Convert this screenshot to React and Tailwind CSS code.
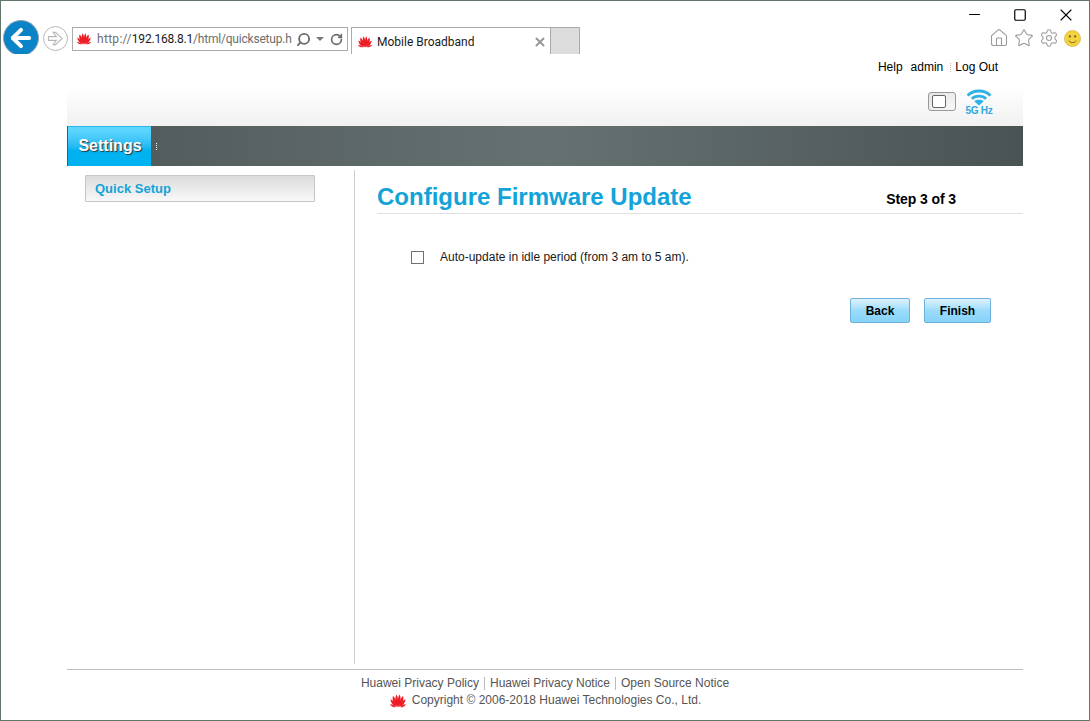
import { ArrowLeft, Home, Star, Settings, Search, RotateCw, X, Minus, Square } from 'lucide-react';

const HuaweiLogo = ({ className }) => (
  <svg viewBox="0 0 32 24" className={className}>
    <g fill="#ee1c25">
      <path d="M15.3 23.5 C11 16 10 7 13 0.5 C16.5 4 17 15 15.3 23.5 Z" />
      <path d="M16.7 23.5 C21 16 22 7 19 0.5 C15.5 4 15 15 16.7 23.5 Z" />
      <path d="M14 22.5 C9 18 5 10.5 7 3 C11.5 6.5 14.5 15 14 22.5 Z" />
      <path d="M18 22.5 C23 18 27 10.5 25 3 C20.5 6.5 17.5 15 18 22.5 Z" />
      <path d="M12.8 22.5 C8 20.5 3 15.5 2.5 9 C7 10.5 11.5 16.5 12.8 22.5 Z" />
      <path d="M19.2 22.5 C24 20.5 29 15.5 29.5 9 C25 10.5 20.5 16.5 19.2 22.5 Z" />
      <path d="M11.5 23 C8 23 4 21.5 2 18 C6 17.5 9.5 20 11.5 23 Z" />
      <path d="M20.5 23 C24 23 28 21.5 30 18 C26 17.5 22.5 20 20.5 23 Z" />
    </g>
  </svg>
);

const BlueButton = ({ label, width }) => (
  <button className={`${width} h-[25px] rounded-[2px] border border-[#6fb1de] bg-gradient-to-b from-[#e0f3fe] via-[#9bdcfb] to-[#86d3f9] text-[12px] font-bold text-black`}>
    {label}
  </button>
);

const Wifi5g = () => (
  <div className="flex flex-col items-center w-[28px]">
    <svg viewBox="0 0 28 18" className="w-[28px] h-[17px]" fill="none" stroke="#2fb0e6" strokeWidth="3">
      <path d="M2 7 C8 0.5 20 0.5 26 7" />
      <path d="M6.5 10.5 C10 6.5 18 6.5 21.5 10.5" />
      <path d="M9 13 L14 17.5 L19 13 C16 11 12 11 9 13 Z" fill="#2fb0e6" stroke="none" />
    </svg>
    <span className="text-[10px] leading-[10px] font-bold text-[#2fa8e0] whitespace-nowrap tracking-[-0.3px]">5G Hz</span>
  </div>
);

export default function App() {
  return (
    <div className="w-[1090px] h-[721px] bg-white border border-[#64766a] flex flex-col overflow-hidden font-['Liberation_Sans',Arial,sans-serif]">
      {/* Browser chrome */}
      <div className="h-[53px] flex shrink-0 overflow-hidden">
        <div className="flex items-start pl-[2px] pt-[19px]">
          <div className="w-[36px] h-[36px] rounded-full bg-[#0a84c6] border border-[#8fa3ae] flex items-center justify-center">
            <ArrowLeft className="w-[28px] h-[28px] text-white" strokeWidth={3.4} />
          </div>
          <div className="ml-[4px] mt-[6px] w-[25px] h-[25px] rounded-full border border-[#b9b9b9] flex items-center justify-center">
            <svg viewBox="0 0 18 18" className="w-[17px] h-[17px]" fill="none" stroke="#b5b5b5" strokeWidth="1.1">
              <path d="M1.5 7 H10 L6.5 2.5 H9 L16 9 L9 15.5 H6.5 L10 11 H1.5 Z" />
            </svg>
          </div>
          <div className="ml-[4px] mt-[7px] w-[276px] h-[24px] border border-[#ababab] flex items-center pl-[3px] pr-[4px]">
            <HuaweiLogo className="w-[16px] h-[12px] shrink-0" />
            <span className="ml-[5px] text-[12px] font-['Roboto',sans-serif] text-[#6d6d6d] whitespace-nowrap w-[198px]">
              <span className="tracking-[0.3px]">http://</span>
              <span className="text-[#1a1a1a] tracking-[-0.2px]">192.168.8.1</span>
              <span className="tracking-[-0.2px]">/html/quicksetup.h</span>
            </span>
            <Search className="ml-[2px] w-[15px] h-[15px] text-[#6b6b6b] -scale-x-100 shrink-0" strokeWidth={3} />
            <span className="ml-[5px] w-0 h-0 border-x-[4px] border-x-transparent border-t-[4px] border-t-[#777] shrink-0"></span>
            <RotateCw className="ml-[6px] w-[13px] h-[13px] text-[#6b6b6b] shrink-0" strokeWidth={3} />
          </div>
          <div className="ml-[3px] mt-[7px] w-[200px] h-[28px] border border-b-0 border-[#ababab] flex items-center pl-[5px] pr-[3px]">
            <HuaweiLogo className="w-[16px] h-[12px] shrink-0" />
            <span className="ml-[4px] flex-1 text-[12px] font-['Roboto',sans-serif] text-[#1a1a1a] whitespace-nowrap">Mobile Broadband</span>
            <X className="w-[14px] h-[14px] text-[#999]" strokeWidth={3.4} />
          </div>
          <div className="mt-[7px] w-[29px] h-[28px] border border-l-0 border-b-0 border-[#ababab] bg-[#dcdcdc]"></div>
        </div>
        <div className="flex-1 flex flex-col items-end">
          <div className="flex items-center h-[27px] pr-[13px]">
            <Minus className="w-[17px] h-[17px] text-black" size={17} strokeWidth={1.2} absoluteStrokeWidth />
            <Square className="ml-[30px] w-[14px] h-[14px] text-black" size={14} strokeWidth={1.2} absoluteStrokeWidth />
            <X className="ml-[29px] w-[20px] h-[20px] text-black" size={20} strokeWidth={1.1} absoluteStrokeWidth />
          </div>
          <div className="flex items-center gap-[5px] pr-[8px]">
            <Home className="w-[20px] h-[20px] text-[#9a9a9a]" strokeWidth={1.3} />
            <Star className="w-[20px] h-[20px] text-[#9a9a9a]" strokeWidth={1.3} />
            <Settings className="w-[20px] h-[20px] text-[#9a9a9a]" strokeWidth={1.3} />
            <svg viewBox="0 0 16 16" className="w-[17px] h-[17px]">
              <circle cx="8" cy="8" r="7.6" fill="#f4d23c" stroke="#c9b24a" strokeWidth="0.6" />
              <circle cx="5.5" cy="6" r="1" fill="#5a5a3a" />
              <circle cx="10.5" cy="6" r="1" fill="#5a5a3a" />
              <path d="M4.5 10 C6 12.5 10 12.5 11.5 10" fill="none" stroke="#5a5a3a" strokeWidth="0.9" />
            </svg>
          </div>
        </div>
      </div>

      {/* Page */}
      <div className="flex-1 ml-[66px] w-[956px] flex flex-col">
        <header className="h-[72px] shrink-0 bg-gradient-to-b from-white from-[45%] to-[#f1f1f1] flex flex-col items-end pr-[25px]">
          <div className="mt-[5px] flex items-center text-[12px] leading-[16px] text-black">
            <span>Help</span>
            <span className="ml-[8px]">admin</span>
            <span className="ml-[7px] mr-[4px] h-[9px] border-l border-dotted border-[#bbb]"></span>
            <span>Log Out</span>
          </div>
          <div className="mt-[14px] mr-[5px] flex items-center gap-[9px]">
            <div className="mb-[3px] w-[28px] h-[19px] rounded-[3px] border border-[#999] bg-gradient-to-br from-[#e4e4e4] to-[#f8f8f8] pl-[3px] pt-[2px]">
              <div className="w-[14px] h-[13px] rounded-[2px] border border-[#666] bg-white"></div>
            </div>
            <Wifi5g />
          </div>
        </header>

        <nav className="h-[40px] shrink-0 bg-gradient-to-r from-[#4f5858] via-[#667272] to-[#4a5353] flex items-center">
          <div className="ml-[1px] w-[83px] h-full border-t border-[#2fb6ea] bg-gradient-to-b from-[#5cd5ff] from-[10%] to-[#00b3f0] to-[60%] flex items-center justify-center pb-[2px] pl-[1px] text-[16px] font-bold text-white [text-shadow:1px_1px_1px_#333]">
            Settings
          </div>
          <span className="ml-[5px] w-px h-[7px] border-l border-dotted border-white"></span>
        </nav>

        <main className="h-[498px] shrink-0 pt-[4px] flex">
          <aside className="w-[288px] h-full shrink-0 border-r border-[#cfcfcf] pt-[5px] pl-[18px]">
            <div className="w-[230px] h-[27px] border border-[#c6c6c6] rounded-[1px] bg-gradient-to-b from-[#dcdcdc] to-[#f8f8f8] pl-[9px] flex items-center text-[13px] font-bold text-[#12a3d8]">
              Quick Setup
            </div>
          </aside>
          <section className="flex-1 pl-[22px]">
            <div className="h-[44px] border-b border-[#e0e0e0] flex items-start justify-between pr-[67px]">
              <h1 className="mt-[11px] text-[24px] leading-[32px] font-bold text-[#12a3d8]">Configure Firmware Update</h1>
              <span className="mt-[19px] text-[14px] leading-[20px] font-bold text-black tracking-[-0.1px]">Step 3 of 3</span>
            </div>
            <div className="mt-[35px] ml-[34px] flex items-center">
              <span className="w-[13px] h-[13px] border border-[#707070] bg-white"></span>
              <span className="ml-[16px] text-[12px] leading-[16px] text-[#1a1a1a]">Auto-update in idle period (from 3 am to 5 am).</span>
            </div>
            <div className="mt-[33px] pr-[32px] flex justify-end gap-[14px]">
              <BlueButton label="Back" width="w-[60px]" />
              <BlueButton label="Finish" width="w-[67px]" />
            </div>
          </section>
        </main>

        <footer className="mt-[5px] border-t border-[#bdbdbd] pt-[5px] text-[12px] leading-[17px] text-[#555] flex flex-col items-center">
          <div className="flex items-center">
            <span>Huawei Privacy Policy</span>
            <span className="mx-[5px] w-px h-[13px] bg-[#bbb]"></span>
            <span>Huawei Privacy Notice</span>
            <span className="mx-[5px] w-px h-[13px] bg-[#bbb]"></span>
            <span>Open Source Notice</span>
          </div>
          <div className="flex items-center">
            <HuaweiLogo className="w-[18px] h-[14px] mr-[5px]" />
            <span>Copyright © 2006-2018 Huawei Technologies Co., Ltd.</span>
          </div>
        </footer>
      </div>
    </div>
  );
}
